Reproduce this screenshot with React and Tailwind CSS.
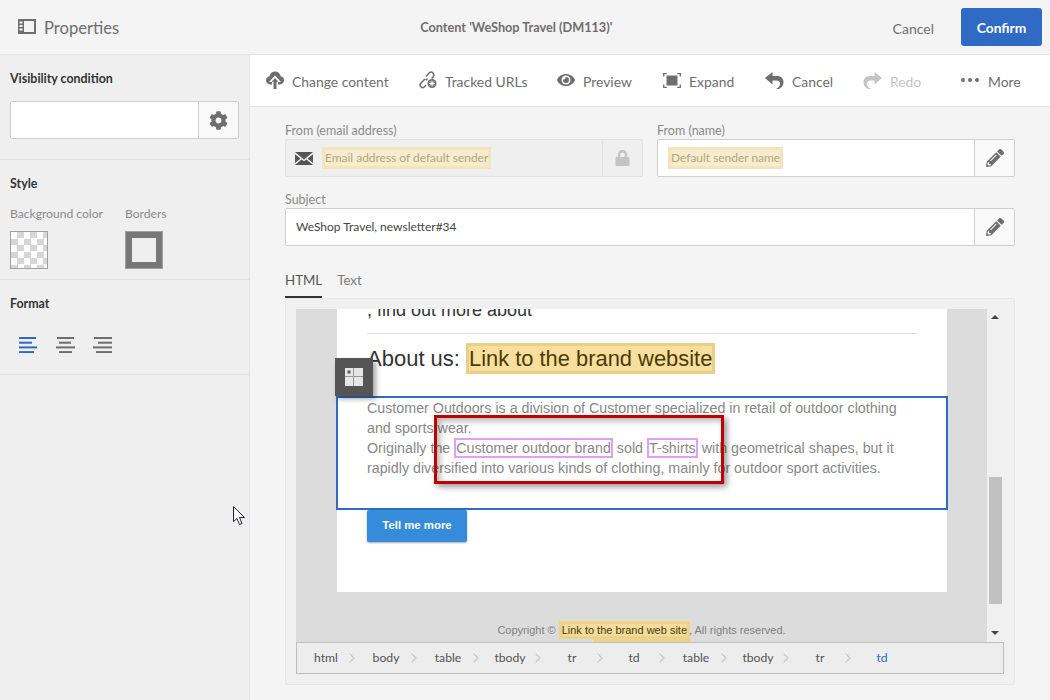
import { FaCog, FaEye, FaLock, FaPencilAlt } from 'react-icons/fa'

const uiFont = 'font-["Lato","Noto_Sans",sans-serif]'

function PanelIcon() {
  return (
    <svg width="18" height="15" viewBox="0 0 18 15" className="text-[#6e6e6e]">
      <path fill="currentColor" d="M0 0h18v15H0zM6 2v11h10V2zM1.5 2.5v2h3v-2zm0 3.5v2h3V6zm0 3.500v2h3v-2z" fillRule="evenodd" />
    </svg>
  )
}

function CloudIcon() {
  return (
    <svg width="18" height="19" viewBox="0 0 18 19">
      <path fill="#6e6e6e" d="M4.500 13.500C2 13.500 0 11.600 0 9.300 0 7.200 1.500 5.500 3.400 5.200 4 2.500 6.200.5 9 .5c3 0 5.300 2.100 5.700 4.800C16.600 5.600 18 7.300 18 9.300c0 2.300-1.900 4.200-4 4.200z" />
      <path fill="#fff" d="M9 4.500l6 6.500h-3v8H6v-8H3z" />
      <path fill="#6e6e6e" d="M9 7l3.500 3.800h-2V18h-3v-7.200h-2z" />
    </svg>
  )
}

function LinkIcon() {
  return (
    <svg width="20" height="20" viewBox="0 0 20 20" fill="none" stroke="#6e6e6e" strokeWidth="1.5">
      <path d="M8 6.500l3-3.500c1.200-1.200 3-1.200 4 0s1.200 2.600 .2 3.800l-1.500 1.700" />
      <path d="M9.500 8.500c-.8 1-1.100 1.200-1.800 1.700M7 9l-4 4c-1.200 1.300-1.200 2.800-.2 3.800s2.600 1 3.700-.1l1.500-1.700" />
      <circle cx="14" cy="13.500" r="4.500" fill="#6e6e6e" stroke="none" />
      <path d="M11 13.500h6M14 10.500v6M12 11.500l4 4M16 11.500l-4 4" stroke="#fff" strokeWidth="1" />
    </svg>
  )
}

function ExpandIcon() {
  return (
    <svg width="18" height="15" viewBox="0 0 18 15" fill="none" stroke="#6e6e6e" strokeWidth="1.300">
      <path d="M.7 3.500V.7h3M14.300.7h3v2.800M17.300 11.500v2.800h-3M3.700 14.300h-3v-2.800" />
      <rect x="3.500" y="2.500" width="11" height="10" fill="#6e6e6e" stroke="none" />
    </svg>
  )
}

function UndoIcon({ color = '#6e6e6e', flip = false }) {
  return (
    <svg width="19" height="17" viewBox="0 0 19 17" className={flip ? '-scale-x-100' : ''}>
      <path fill={color} d="M7.500 0v4h4.500c4.200 0 6.500 2.600 6.500 6.200 0 3-1.800 5.400-4.500 6.800h-3c2.500-1 4-3 4-5.300 0-2-1.300-3.200-3.500-3.200H7.500v4L0 6z" />
    </svg>
  )
}

function MailIcon() {
  return (
    <svg width="18" height="13" viewBox="0 0 18 13">
      <path fill="#555" d="M0 0h18L9 7.500zM0 2.200L5.500 6.500 0 11zM18 2.200L12.500 6.500 18 11zM6.500 7.400L9 9.300l2.500-1.900L18 13H0z" />
    </svg>
  )
}

function AlignIcon({ rows, color }) {
  return (
    <svg width="19" height="16" viewBox="0 0 19 16">
      {rows.map(([x, width], i) => (
        <rect key={i} x={x} y={i * 4.700} width={width} height="2" fill={color} />
      ))}
    </svg>
  )
}

function Chevron() {
  return (
    <svg width="6" height="10" viewBox="0 0 6 10" fill="none" stroke="#c4c4c4" strokeWidth="1.100" className="justify-self-end">
      <path d="M.7.7L5 5 .7 9.300" />
    </svg>
  )
}

function ToolButton({ icon, label, muted = false, gap = 'gap-[7px]', className = '' }) {
  return (
    <div className={`flex items-center ${gap} ${className} ${muted ? 'text-[#c4c4c4]' : 'text-[#6e6e6e]'}`}>
      {icon}
      <span className="pt-[3px] text-[13.900px]">{label}</span>
    </div>
  )
}

function SideHeading({ children }) {
  return <div className="text-[12.400px] font-bold leading-4 text-[#333]">{children}</div>
}

function FieldLabel({ children }) {
  return <div className="h-[17px] text-[12.500px] leading-[17px] text-[#8a8a8a]">{children}</div>
}

function Placeholder({ children }) {
  return (
    <span className="border-[3px] border-[#f1e4bf] bg-[#f7ecce] text-[11.950px] leading-[16px] text-[#b5a67c]">
      {children}
    </span>
  )
}

function EditButton() {
  return (
    <div className="flex w-[40px] shrink-0 items-center justify-center border-l border-[#cfcfcf] bg-[#f9f9f9]">
      <FaPencilAlt className="h-[18px] w-[18px] text-[#6e6e6e]" />
    </div>
  )
}

const pathItems = ['html', 'body', 'table', 'tbody', 'tr', 'td', 'table', 'tbody', 'tr', 'td']

export default function App() {
  return (
    <div className={`flex h-[700px] w-[1050px] flex-col overflow-hidden bg-[#f4f4f4] ${uiFont}`}>
      {/* top bar */}
      <header className="flex h-[55px] shrink-0 items-center border-b border-[#e3e3e3] bg-[#f4f4f4] pl-[18px] pr-[2px]">
        <div className="flex w-[122px] items-center gap-[8px] text-[#6e6e6e]">
          <PanelIcon />
          <span className="pt-[2px] text-[16.600px]">Properties</span>
        </div>
        <div className="flex-1 pt-[2px] text-center text-[12.700px] font-bold text-[#6e6e6e]">Content 'WeShop Travel (DM113)'</div>
        <span className="mr-[27px] pt-[3px] text-[14px] text-[#6e6e6e]">Cancel</span>
        <div className="mr-[6px] flex h-[38px] w-[81px] items-center justify-center rounded-[3px] bg-[#2f6bc4] pt-[2px] text-[13.800px] font-bold text-white">
          Confirm
        </div>
      </header>

      <div className="flex min-h-0 flex-1">
        {/* left panel */}
        <aside className="w-[250px] shrink-0 border-r border-[#e6e6e6] bg-[#efefef]">
          <section className="h-[105px] border-b border-[#e0e0e0] px-[10px] pt-[16px]">
            <SideHeading>Visibility condition</SideHeading>
            <div className="mt-[14px] flex h-[38px] w-[229px] rounded-[2px] border border-[#cfcfcf] bg-white">
              <div className="flex-1" />
              <div className="flex w-[40px] items-center justify-center border-l border-[#cfcfcf] bg-[#f9f9f9]">
                <FaCog className="h-[19px] w-[19px] text-[#6e6e6e]" />
              </div>
            </div>
          </section>
          <section className="h-[120px] border-b border-[#e0e0e0] px-[10px] pt-[16px]">
            <SideHeading>Style</SideHeading>
            <div className="mt-[12px] flex">
              <div className="w-[115px]">
                <div className="h-[27px] text-[12.100px] leading-[20px] text-[#8a8a8a]">Background color</div>
                <div className="h-[38px] w-[38px] border border-[#a0a0a0] bg-[repeating-conic-gradient(#d6d6d6_0%_25%,#fdfdfd_0%_50%)] bg-[length:13px_13px]" />
              </div>
              <div>
                <div className="h-[27px] text-[12.100px] leading-[20px] text-[#8a8a8a]">Borders</div>
                <div className="h-[38px] w-[38px] border border-[#a0a0a0] bg-[#efefef] shadow-[inset_0_0_0_6px_#777]" />
              </div>
            </div>
          </section>
          <section className="h-[95px] border-b border-[#e0e0e0] px-[10px] pt-[16px]">
            <SideHeading>Format</SideHeading>
            <div className="mt-[25px] flex gap-[18px] pl-[9px]">
              <AlignIcon color="#2f6bc4" rows={[[0, 17], [0, 13], [0, 18], [0, 15]]} />
              <AlignIcon color="#6e6e6e" rows={[[1, 17], [3, 12], [0, 19], [3, 13]]} />
              <AlignIcon color="#6e6e6e" rows={[[1, 18], [5, 14], [0, 19], [3, 16]]} />
            </div>
          </section>
        </aside>

        <main className="min-w-0 flex-1">
          {/* toolbar */}
          <div className="flex h-[52px] items-center border-b border-[#e6e6e6] bg-white pl-[16px]">
            <ToolButton className="w-[152px]" icon={<CloudIcon />} gap="gap-[8px]" label="Change content" />
            <ToolButton className="w-[139px]" icon={<LinkIcon />} label="Tracked URLs" />
            <ToolButton className="w-[106px]" icon={<FaEye className="h-[18px] w-[18px]" />} gap="gap-[8px]" label="Preview" />
            <ToolButton className="w-[102px]" icon={<ExpandIcon />} gap="gap-[8px]" label="Expand" />
            <ToolButton className="w-[98px]" icon={<UndoIcon />} gap="gap-[8px]" label="Cancel" />
            <ToolButton className="w-[98px]" icon={<UndoIcon color="#c4c4c4" flip />} gap="gap-[8px]" muted label="Redo" />
            <ToolButton
              icon={
                <span className="flex w-[18px] justify-between">
                  <span className="h-[4px] w-[4px] rounded-full bg-[#6e6e6e]" />
                  <span className="h-[4px] w-[4px] rounded-full bg-[#6e6e6e]" />
                  <span className="h-[4px] w-[4px] rounded-full bg-[#6e6e6e]" />
                </span>
              }
              gap="gap-[9px]"
              label="More"
            />
          </div>

          <div className="px-[35px] pt-[15px]">
            <div className="flex gap-[14px]">
              <div className="w-[358px]">
                <FieldLabel>From (email address)</FieldLabel>
                <div className="flex h-[38px] rounded-[2px] border border-[#e2e2e2] bg-[#efefef]">
                  <div className="flex flex-1 items-center gap-[9px] pl-[9px]">
                    <MailIcon />
                    <Placeholder>Email address of default sender</Placeholder>
                  </div>
                  <div className="flex w-[40px] items-center justify-center border-l border-[#e2e2e2]">
                    <FaLock className="h-[16px] w-[15px] text-[#c4c4c4]" />
                  </div>
                </div>
              </div>
              <div className="flex-1">
                <FieldLabel>From (name)</FieldLabel>
                <div className="flex h-[38px] rounded-[2px] border border-[#cfcfcf] bg-white">
                  <div className="flex flex-1 items-center pl-[10px]">
                    <Placeholder>Default sender name</Placeholder>
                  </div>
                  <EditButton />
                </div>
              </div>
            </div>

            <div className="mt-[14px]">
              <FieldLabel>Subject</FieldLabel>
              <div className="flex h-[38px] rounded-[2px] border border-[#cfcfcf] bg-white">
                <div className="flex flex-1 items-center pl-[10px] text-[12px] text-[#444]">WeShop Travel, newsletter#34</div>
                <EditButton />
              </div>
            </div>

            <div className="mt-[24px] flex h-[28px] gap-[15px] text-[13.300px] leading-[20px]">
              <div className="h-[28px] border-b-2 border-[#333] text-[#555]">HTML</div>
              <div className="text-[#7a7a7a]">Text</div>
            </div>

            {/* html preview */}
            <div className="h-[387px] rounded-[2px] border border-[#e8e8e8] bg-[#f0f0f0] px-[10px] pt-[10px]">
              <div className="relative flex h-[333px] w-[707px] overflow-hidden font-['Liberation_Sans',sans-serif]">
                <div className="w-[691px] shrink-0 overflow-hidden bg-[#dcdcdc]">
                  <div className="mx-[41px] -mt-[9px] h-[292px] w-[610px] bg-white">
                    <div className="px-[30px]">
                      <div className="h-[34px] border-b border-[#ddd] text-[18px] leading-[20px] text-[#333]">
                        <div className="-mt-[4px]">, find out more about</div>
                      </div>
                      <div className="mt-[9px] flex h-[31px] items-center text-[22px] text-[#333]">
                        About us:
                        <span className="ml-[6px] border-[3px] border-[#e8d08a] bg-[#f8df9d] text-[21.900px] leading-[25px] text-[#4a3b08]">
                          Link to the brand website
                        </span>
                      </div>
                    </div>
                    <div className="-mx-px mt-[22px] h-[114px] border-2 border-[#2f6bc4] pl-[29px] pr-[30px] text-[14.270px] leading-[20px] text-[#888]">
                      Customer Outdoors is a division of Customer specialized in retail of outdoor clothing
                      <br />
                      and sports wear.
                      <br />
                      Originally the{' '}
                      <span className="border-2 border-[#e0a0f8]">Customer outdoor brand</span> sold{' '}
                      <span className="border-2 border-[#e0a0f8]">T-shirts</span> with geometrical shapes, but it
                      <br />
                      rapidly diversified into various kinds of clothing, mainly for outdoor sport activities.
                    </div>
                    <div className="ml-[30px] flex h-[32px] w-[100px] items-center justify-center rounded-[2px] bg-[#368bdb] text-[11.400px] font-bold text-white shadow-[0_1px_2px_rgba(0,0,0,0.35)]">
                      Tell me more
                    </div>
                  </div>
                  <div className="mt-[29px] flex justify-center text-[11px] leading-[18px] text-[#808080]">
                    Copyright ©
                    <span className="mx-[3px] border-[3px] border-[#ecd28a] bg-[#f3dc9c] leading-[12px] text-[#4a3b08]">Link to the brand web site</span>
                    <span className="-ml-[4px]">, All rights reserved.</span>
                  </div>
                  <div className="ml-[297px] h-[3px] w-[98px] bg-[#ecd28a]" />
                </div>

                {/* scrollbar */}
                <div className="flex flex-1 flex-col items-center bg-[#f0f0f0] pt-[6px]">
                  <div className="h-0 w-0 border-x-[4px] border-b-[4px] border-x-transparent border-b-[#444]" />
                  <div className="mt-[158px] h-[127px] w-[13px] bg-[#c0c0c0]" />
                  <div className="mt-[27px] h-0 w-0 border-x-[4px] border-t-[4px] border-x-transparent border-t-[#444]" />
                </div>

                {/* block handle */}
                <div className="absolute left-[39px] top-[49px] flex h-[38px] w-[38px] items-center justify-center bg-[#555] shadow-[3px_3px_5px_rgba(0,0,0,0.35)]">
                  <svg width="18" height="18" viewBox="0 0 18 18">
                    <rect width="18" height="18" fill="#e6e6e6" />
                    <path d="M8.500 0v18M0 8.500h18" stroke="#999" strokeWidth="1" />
                    <rect x="2.500" y="2.500" width="3" height="3" fill="#555" />
                  </svg>
                </div>

                {/* red annotation */}
                <div className="absolute left-[138px] top-[106px] h-[69px] w-[290px] border-[3px] border-[#c00000] shadow-[3px_3px_6px_rgba(0,0,0,0.4),inset_3px_3px_6px_rgba(0,0,0,0.3)]" />
              </div>

              <div className="flex h-[32px] w-[708px] items-center border border-[#bdbdbd] bg-[#ededed] text-[12.200px] text-[#555]">
                {pathItems.map((item, i) => (
                  <div key={i} className={`grid shrink-0 grid-cols-[1fr_auto_1fr] items-center ${i === 0 ? 'w-[58px]' : 'w-[62px]'}`}>
                    <span />
                    <span className={i === 9 ? 'text-[#2f6bc4]' : ''}>{item}</span>
                    {i < 9 ? <Chevron /> : <span />}
                  </div>
                ))}
              </div>
            </div>
          </div>
        </main>
      </div>

      {/* mouse cursor */}
      <svg width="14" height="20" viewBox="0 0 14 20" className="absolute left-[233px] top-[506px]">
        <path d="M.5.5v15l3.500-3 2.500 6 2.500-1-2.500-6h5z" fill="#fff" stroke="#223" strokeWidth="1" />
      </svg>
    </div>
  )
}
